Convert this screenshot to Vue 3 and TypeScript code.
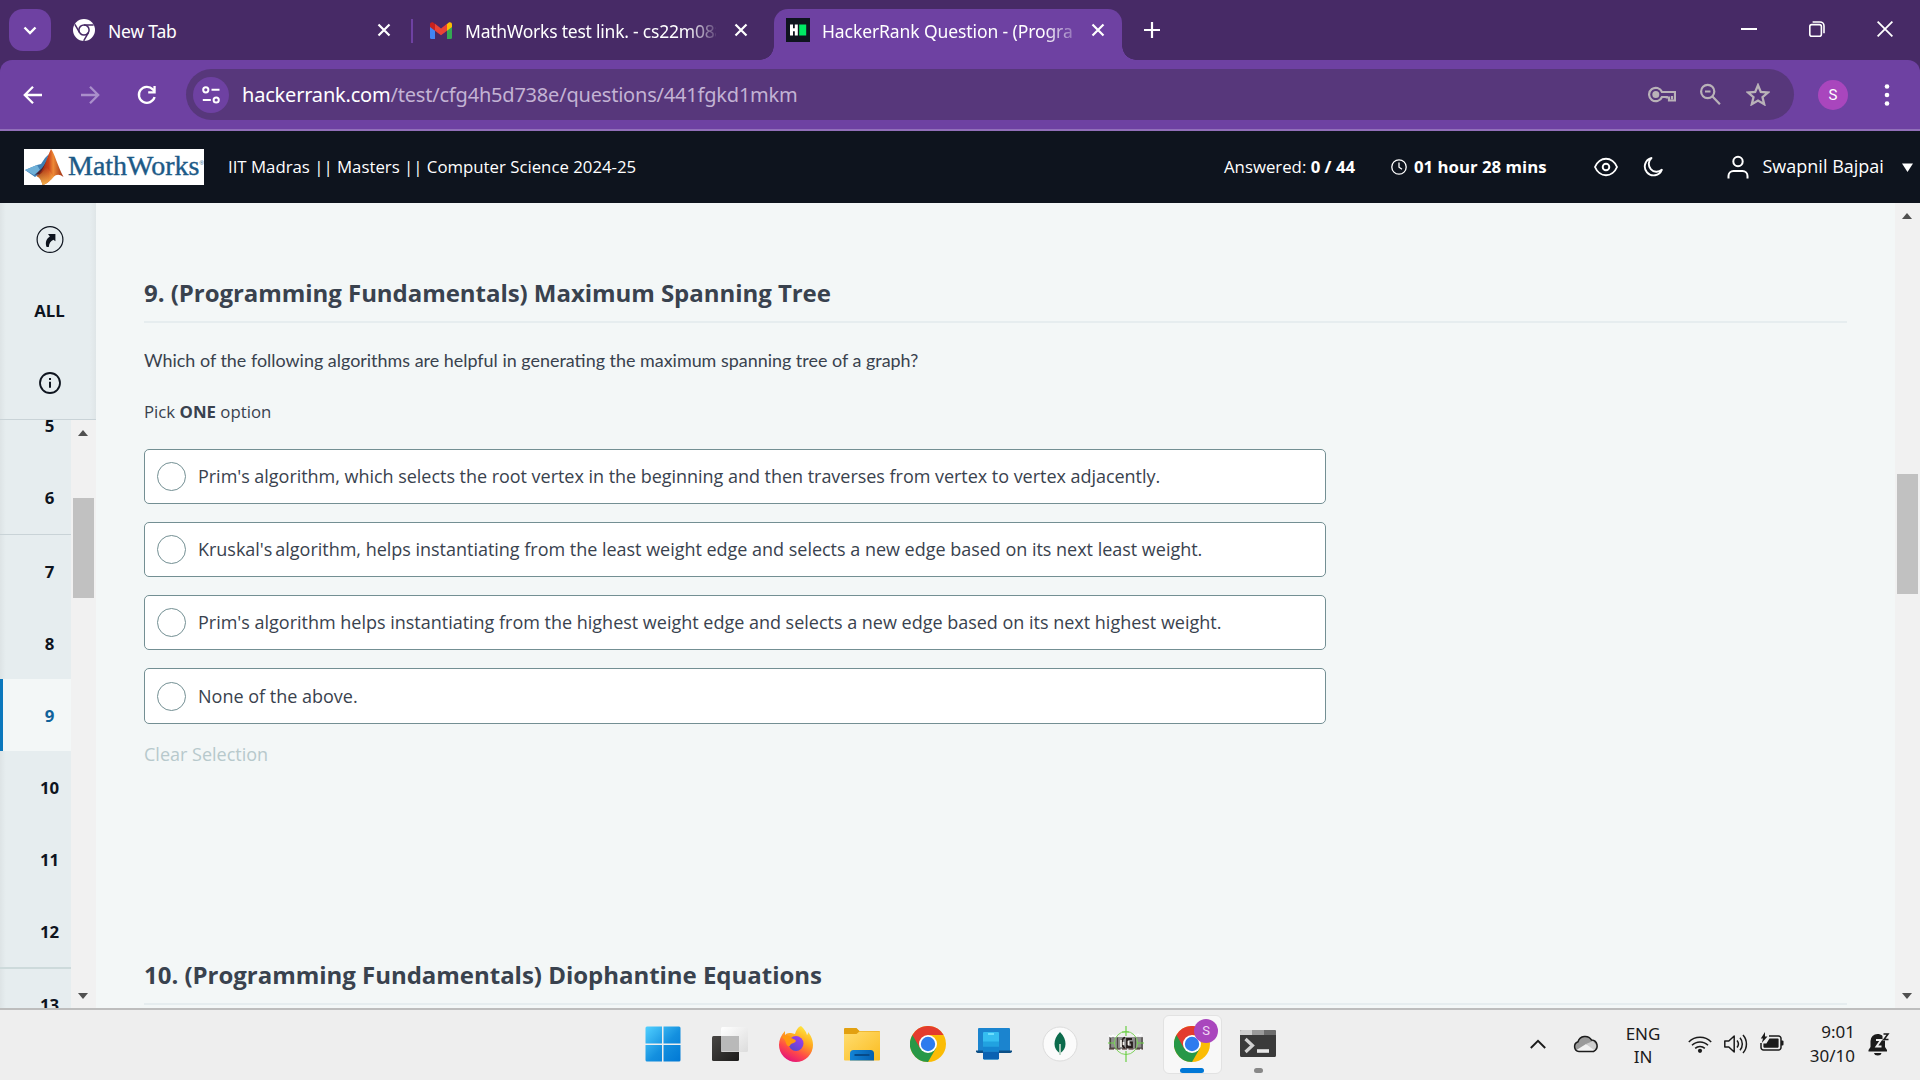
<script setup lang="ts">
interface NavEntry {
  id: number
  label: string
  active?: boolean
  rule?: 'thin' | 'thick'
}

const entries: NavEntry[] = [
  { id: 5, label: '5' },
  { id: 6, label: '6', rule: 'thin' },
  { id: 7, label: '7' },
  { id: 8, label: '8' },
  { id: 9, label: '9', active: true },
  { id: 10, label: '10' },
  { id: 11, label: '11' },
  { id: 12, label: '12', rule: 'thick' },
  { id: 13, label: '13' },
]

const options: { key: string; text: string }[] = [
  { key: 'a', text: "Prim's algorithm, which selects the root vertex in the beginning and then traverses from vertex to vertex adjacently." },
  { key: 'b', text: "Kruskal's\u2009algorithm, helps instantiating from the least weight edge and selects a new edge based on its next least weight." },
  { key: 'c', text: "Prim's algorithm helps instantiating from the highest weight edge and selects a new edge based on its next highest weight." },
  { key: 'd', text: 'None of the above.' },
]
</script>

<template>
  <div class="screen">
    <div class="tabstrip">
      <div class="tab-search">
        <svg width="42" height="42" viewBox="0 0 42 42"><path d="M15.500 18.500l5.500 5.500 5.500-5.500" fill="none" stroke="#fff" stroke-width="2.400" /></svg>
      </div>
      <div class="tab tab-one">
        <svg class="fav" width="22" height="22" viewBox="0 0 22 22">
          <circle cx="11" cy="11" r="11" fill="#fff" />
          <circle cx="11" cy="11" r="5.100" fill="#fff" stroke="#472a66" stroke-width="1.500" />
          <path d="M11 5.900h9.600M6.600 13.600L1.900 5.400M15.400 13.600L10.700 21.800" stroke="#472a66" stroke-width="1.500" />
        </svg>
        <span class="tab-title t1">New Tab</span>
        <svg class="x" width="14" height="14" viewBox="0 0 14 14"><path d="M1.500 1.500l11 11M12.500 1.500l-11 11" stroke="#fff" stroke-width="2.200" /></svg>
      </div>
      <div class="tab-sep"></div>
      <div class="tab tab-two">
        <svg class="fav" width="22" height="17" viewBox="0 0 22 17">
          <path d="M0 3v12.500a1.500 1.500 0 0 0 1.500 1.500H5V7z" fill="#4285f4" />
          <path d="M22 3v12.500a1.500 1.500 0 0 1-1.500 1.500H17V7z" fill="#34a853" />
          <path d="M17 2l1.500-1.200C20 -.3 22 .5 22 2.500V5l-5 3.800z" fill="#fbbc04" />
          <path d="M5 2L3.500 .8C2 -.3 0 .5 0 2.500V5l5 3.800z" fill="#c5221f" />
          <path d="M5 8.800V1.800l6 4.600 6-4.600v7l-6 4.500z" fill="#ea4335" />
        </svg>
        <span class="tab-title t2">MathWorks test link. - cs22m088</span>
        <svg class="x" width="14" height="14" viewBox="0 0 14 14"><path d="M1.500 1.500l11 11M12.500 1.500l-11 11" stroke="#fff" stroke-width="2.200" /></svg>
      </div>
      <div class="tab tab-active">
        <svg class="fav" width="24" height="24" viewBox="0 0 24 24">
          <rect width="24" height="24" fill="#0e141e" />
          <path d="M4 6.500h3v3.800h1.800V6.500h3v11H8.800v-4.200H7v4.200H4z" fill="#fff" />
          <rect x="13.200" y="6.500" width="7" height="11" fill="#00ea64" />
        </svg>
        <span class="tab-title t3">HackerRank Question - (Program</span>
        <svg class="x" width="14" height="14" viewBox="0 0 14 14"><path d="M1.500 1.500l11 11M12.500 1.500l-11 11" stroke="#fff" stroke-width="2.200" /></svg>
      </div>
      <svg class="plus" width="16" height="16" viewBox="0 0 16 16"><path d="M8 0v16M0 8h16" stroke="#fff" stroke-width="2.200" /></svg>
      <div class="window-controls">
        <svg width="16" height="16" viewBox="0 0 16 16"><path d="M0 8h16" stroke="#fff" stroke-width="2" /></svg>
        <svg width="16" height="16" viewBox="0 0 16 16"><g fill="none" stroke="#fff" stroke-width="1.600"><rect x=".8" y="3.600" width="11.600" height="11.600" rx="2" /><path d="M3.600 1h7.400a4 4 0 0 1 4 4v7.200" /></g></svg>
        <svg width="16" height="16" viewBox="0 0 16 16"><path d="M.6 .6l14.800 14.800M15.400 .6L.6 15.400" stroke="#fff" stroke-width="1.800" /></svg>
      </div>
    </div>

    <div class="toolbar-wrap">
      <div class="toolbar">
        <svg class="nav-back" width="20" height="20" viewBox="0 0 20 20"><path d="M19 10H2M10 1.800L1.800 10 10 18.200" fill="none" stroke="#fff" stroke-width="2.300" /></svg>
        <svg class="nav-fwd" width="20" height="20" viewBox="0 0 20 20"><path d="M1 10h17M10 1.800L18.200 10 10 18.200" fill="none" stroke="#aa8fcb" stroke-width="2.300" /></svg>
        <svg class="nav-reload" width="20" height="20" viewBox="0 0 20 20"><path d="M17.600 12A8 8 0 1 1 15.800 4.400L17.500 6.500" fill="none" stroke="#fff" stroke-width="2.300" /><path d="M18.700 1v7.500h-7.500V6.300h5.200V1z" fill="#fff" /></svg>
        <div class="omnibox">
          <div class="site-info">
            <svg width="18" height="18" viewBox="0 0 18 18"><g fill="none" stroke="#fff" stroke-width="2"><circle cx="3.800" cy="3.800" r="2.600" /><circle cx="14.200" cy="14" r="2.600" /><path d="M9.500 3.800H17.500M.8 14h8" /></g></svg>
          </div>
          <div class="url"><span class="host">hackerrank.com</span><span class="path">/test/cfg4h5d738e/questions/441fgkd1mkm</span></div>
          <div class="omni-actions">
            <svg width="28" height="18" viewBox="0 0 28 18"><g fill="none" stroke="#b9b2b8" stroke-width="2.200"><path d="M14 6h13v8.500h-6V11.500h-2.200v-0.500H14A6.700 6.700 0 1 1 14 6z" /><circle cx="7.800" cy="8.500" r="2.400" fill="#b9b2b8" /><path d="M24 10v3.500" /></g></svg>
            <svg width="22" height="24" viewBox="0 0 22 24"><g fill="none" stroke="#b9b2b8" stroke-width="2.200"><circle cx="7.700" cy="8.500" r="6.600" /><path d="M12.500 13.500l7.400 7.800M5 8.500h5.500" /></g></svg>
            <svg width="24" height="23" viewBox="0 0 24 23"><path d="M12 2.200l2.800 6.700 7.200.6-5.500 4.700 1.700 7L12 17.500l-6.200 3.700 1.700-7L2 9.500l7.200-.6z" fill="none" stroke="#b9b2b8" stroke-width="2.300" /></svg>
          </div>
        </div>
        <div class="avatar">S</div>
        <svg class="kebab" width="6" height="24" viewBox="0 0 6 24"><g fill="#fff"><circle cx="3" cy="3.500" r="2.300" /><circle cx="3" cy="12" r="2.300" /><circle cx="3" cy="20.500" r="2.300" /></g></svg>
      </div>
    </div>

    <header class="test-header">
      <div class="logo">
        <svg width="41" height="36" viewBox="0 0 41 36">
          <defs>
            <linearGradient id="flame" x1="0" x2="1"><stop offset="0" stop-color="#7a1f12" /><stop offset=".45" stop-color="#c9421a" /><stop offset=".62" stop-color="#ee8a35" /><stop offset="1" stop-color="#9c2a12" /></linearGradient>
            <linearGradient id="flame-base" x1="0" y1="0" x2="0" y2="1"><stop offset="0" stop-color="#f2a43c" stop-opacity="0" /><stop offset="1" stop-color="#f6b44c" /></linearGradient>
          </defs>
          <path d="M1 21l12-5 4-1 4-6 4-4-6 17-8 6z" fill="#3f7fb4" />
          <path d="M1 21l12-5 3 5-6 5z" fill="#6fb0d8" />
          <path d="M11 26l5-5c4-3 7-10 9-15-1 9-2 17-8 20-2-1-4-1-6 0z" fill="#54202a" />
          <path d="M27 0c3 3 7 18 12.500 28-4-3-7-3-10 0-3 3-6 7-11 8-1-5-3-8-6-9 8-5 10-18 14.500-27z" fill="url(#flame)" />
          <path d="M22 18c3 2 5 6 7.500 10-3 3-6 7-11 8-1-5-3-8-6-9 4-1 7-5 9.500-9z" fill="url(#flame-base)" />
        </svg>
        <span class="logo-word">MathWorks</span><span class="logo-reg">®</span>
      </div>
      <span class="test-name">IIT Madras || Masters || Computer Science 2024-25</span>
      <span class="answered">Answered: <b>0 / 44</b></span>
      <svg class="clock" width="16" height="16" viewBox="0 0 16 16"><g fill="none" stroke="#fff" stroke-width="1.300"><circle cx="8" cy="8" r="7.200" /><path d="M8 3.500V8.200l3 2" /></g></svg>
      <b class="timer">01 hour 28 mins</b>
      <svg class="eye" width="24" height="20" viewBox="0 0 24 20"><g fill="none" stroke="#fff" stroke-width="1.900"><path d="M1 10C3 5 7.500 1.800 12 1.800S21 5 23 10c-2 5-6.500 8.200-11 8.200S3 15 1 10z" /><circle cx="12" cy="10" r="3.300" /></g></svg>
      <svg class="moon" width="20" height="20" viewBox="0 0 20 20"><path d="M8.500 1A8.800 8.800 0 1 0 18.800 12.800 7.600 7.600 0 0 1 8.500 1z" fill="none" stroke="#fff" stroke-width="1.900" stroke-linejoin="round" /></svg>
      <svg class="person" width="22" height="24" viewBox="0 0 22 24"><g fill="none" stroke="#fff" stroke-width="2"><circle cx="11" cy="6.500" r="4.700" /><path d="M1.500 23.500v-2.500a5 5 0 0 1 5-5h9a5 5 0 0 1 5 5V23.500" /></g></svg>
      <span class="user">Swapnil Bajpai</span>
      <svg class="caret" width="11" height="9" viewBox="0 0 11 9"><path d="M0 .5h11L5.500 9z" fill="#fff" /></svg>
    </header>

    <div class="body">
      <aside class="side">
        <div class="side-top">
          <div class="side-cell">
            <svg width="28" height="28" viewBox="0 0 28 28"><circle cx="14" cy="14.500" r="12.900" fill="none" stroke="#0e141e" stroke-width="1.200" /><path d="M12 9.100h7.400v7.200l-2-1.600c-3 1.300-4.200 3.500-4.600 7.400H10.600c-1.600-4.600-.5-8.300 3.300-10.700z" fill="#0e141e" /></svg>
          </div>
          <div class="side-cell"><span class="all">ALL</span></div>
          <div class="side-cell">
            <svg width="22" height="22" viewBox="0 0 22 22"><circle cx="11" cy="11" r="10" fill="none" stroke="#0e141e" stroke-width="1.800" /><path d="M11 9.800v6M11 6v2" stroke="#0e141e" stroke-width="2" /></svg>
          </div>
        </div>
        <div class="side-list">
          <div class="entries">
            <div v-for="e in entries" :key="e.id" class="entry" :class="[{ active: e.active }, e.rule]"><span>{{ e.label }}</span></div>
          </div>
          <div class="scroll side-scroll">
            <i class="up"></i><div class="thumb"></div><i class="down"></i>
          </div>
        </div>
      </aside>

      <main class="content">
        <h2 class="q-title">9. (Programming Fundamentals) Maximum Spanning Tree</h2>
        <p class="q-text">Which of the following algorithms are helpful in generating the maximum spanning tree of a graph?</p>
        <p class="q-pick">Pick <b>ONE</b> option</p>
        <div class="options">
          <label v-for="o in options" :key="o.key" class="option"><span class="radio"></span><span class="option-text" :class="'opt-' + o.key">{{ o.text }}</span></label>
        </div>
        <div class="clear">Clear Selection</div>
        <h2 class="q-title next">10. (Programming Fundamentals) Diophantine Equations</h2>
      </main>
      <div class="scroll page-scroll">
        <i class="up"></i><div class="thumb"></div><i class="down"></i>
      </div>
    </div>

    <footer class="taskbar">
      <div class="apps">
        <div class="app">
          <svg width="36" height="36" viewBox="0 0 36 36">
            <defs><linearGradient id="win" x1="0" y1="0" x2="1" y2="1"><stop offset="0" stop-color="#51d0ff" /><stop offset=".55" stop-color="#1490df" /><stop offset="1" stop-color="#0078d4" /></linearGradient></defs>
            <path d="M2 .5h15v17H.5V2A1.500 1.500 0 0 1 2 .5zM18.500 .5H34A1.500 1.500 0 0 1 35.500 2v15.500h-17zM.5 19H17v16.500H2A1.500 1.500 0 0 1 .5 34zM18.500 19h17v15a1.500 1.500 0 0 1-1.500 1.500H18.500z" fill="url(#win)" />
          </svg>
        </div>
        <div class="app">
          <svg width="36" height="36" viewBox="0 0 36 36">
            <defs>
              <linearGradient id="tvd" x1="0" y1="0" x2="1" y2="1"><stop offset="0" stop-color="#484644" /><stop offset="1" stop-color="#1c1b1a" /></linearGradient>
              <linearGradient id="tvl" x1="0" y1="0" x2="1" y2="1"><stop offset="0" stop-color="#fff" /><stop offset="1" stop-color="#dcdcdc" /></linearGradient>
            </defs>
            <rect x="0" y="10" width="27" height="25" rx="1.500" fill="url(#tvd)" />
            <rect x="9" y="1" width="27" height="25" rx="1.500" fill="url(#tvl)" />
            <path d="M9 10h18v15.500H9z" fill="#b9b9b9" />
          </svg>
        </div>
        <div class="app">
          <svg width="36" height="36" viewBox="0 0 36 36">
            <defs>
              <linearGradient id="ff" x1=".8" y1="0" x2=".3" y2="1"><stop offset="0" stop-color="#fff044" /><stop offset=".4" stop-color="#ffa51e" /><stop offset=".7" stop-color="#ff4a48" /><stop offset="1" stop-color="#e2107e" /></linearGradient>
              <linearGradient id="ffg" x1=".8" y1="0" x2=".2" y2="1"><stop offset="0" stop-color="#a33df0" /><stop offset="1" stop-color="#5448c8" /></linearGradient>
            </defs>
            <path d="M23 0c3 3 5 5 6 9 1-1 1-2 1-3 4 5 5 9 5 13a17 17 0 0 1-34 0C1 14 3 9 7 5v4c2-2 4-2 6-2l4 1c1-4 3-7 6-8z" fill="url(#ff)" />
            <circle cx="18" cy="17.500" r="7.500" fill="url(#ffg)" />
            <path d="M4 11c3-2 7-2 9 1 2 1 4 1 5 3-1 2-4 2-5 3-1 1-1 3-3 2-3-2-1-5-6-9z" fill="#ff980e" />
          </svg>
        </div>
        <div class="app">
          <svg width="36" height="36" viewBox="0 0 36 36">
            <defs>
              <linearGradient id="fd" x1="0" y1="0" x2="1" y2="1"><stop offset="0" stop-color="#ffdd70" /><stop offset="1" stop-color="#fbbc20" /></linearGradient>
              <linearGradient id="fb" x1="0" y1="0" x2="1" y2="0"><stop offset="0" stop-color="#1384d6" /><stop offset="1" stop-color="#0560b0" /></linearGradient>
            </defs>
            <path d="M0 3A1 1 0 0 1 1 2h11.500l3 3H35a1 1 0 0 1 1 1V9H0z" fill="#e2a010" />
            <path d="M0 8h12.500l3-2.500H36v28a1 1 0 0 1-1 1H1a1 1 0 0 1-1-1z" fill="url(#fd)" />
            <path d="M6 34.500v-7A3.500 3.500 0 0 1 9.500 24h17A3.500 3.500 0 0 1 30 27.500v7z" fill="url(#fb)" />
            <path d="M10.500 29h15" stroke="#064a88" stroke-width="2" />
          </svg>
        </div>
        <div class="app">
          <svg width="36" height="36" viewBox="0 0 36 36">
            <circle cx="18" cy="18" r="18" fill="#fbbc05" />
            <path d="M18 18L2.400 9A18 18 0 0 0 18 36l7.800-13.500z" fill="#279847" />
            <path d="M18 9h15.600A18 18 0 0 0 2.400 9l7.800 13.500z" fill="#e33b2e" />
            <circle cx="18" cy="18" r="9" fill="#fff" /><circle cx="18" cy="18" r="7.200" fill="#2d7cee" />
          </svg>
        </div>
        <div class="app">
          <svg width="36" height="36" viewBox="0 0 36 36">
            <path d="M2 3a1 1 0 0 1 1-1h30a1 1 0 0 1 1 1v22H2z" fill="#1b84cf" />
            <path d="M0 24.500h36v1.500l-1.500 1H1.500L0 26z" fill="#0c4f86" />
            <rect x="7" y="6" width="16" height="27.500" rx="1" fill="#35bdf0" />
            <path d="M7 15.500h16v5H7z" fill="#21a2e0" /><path d="M7 20.500h16v5H7z" fill="#1485d0" /><path d="M7 25.500h16v7l-1 1H8l-1-1z" fill="#0a62b2" />
            <path d="M12 8h6" stroke="#7be6ff" stroke-width="1.600" />
          </svg>
        </div>
        <div class="app">
          <svg width="36" height="36" viewBox="0 0 36 36">
            <circle cx="18" cy="18" r="17" fill="#fbfbfb" stroke="#dcdcdc" />
            <path d="M18 6c4 4 5.500 8 5.500 12 0 4-2 7-5 9l-.5 2-.5-2c-3-2-5-5-5-9C12.500 14 14 10 18 6z" fill="#0c6b4c" />
            <path d="M18 18v11" stroke="#b9d3c4" stroke-width="1.800" />
          </svg>
        </div>
        <div class="app">
          <svg width="36" height="36" viewBox="0 0 36 36">
            <path d="M1 11h34v12H1z" fill="#8e8e8e" />
            <path d="M2.500 11.500v10.500h5M9.500 11.500v10.500M27.500 11.500v10.500M34 11.500v10.500h-5" stroke="#4a4541" stroke-width="1.200" fill="none" />
            <path d="M17 11.500c-4 1-4 9 0 10.500M24 13h-5v8h5v-4.500h-2.500" stroke="#241c1a" stroke-width="1.800" fill="none" />
            <path d="M13 14v7M20.500 15v4M15.500 16v3" stroke="#f4f1ec" stroke-width="1.700" fill="none" />
            <path d="M1 23h34" stroke="#3a2018" stroke-width="1" stroke-dasharray="5 1.500" />
            <path d="M1 9l2 2 2-2 2 2 2-2M26 8l2 2 2-2 2 2 2-2" stroke="#fff" stroke-width="1.200" fill="none" />
            <circle cx="18" cy="17" r="11.500" fill="none" stroke="#7fd45c" stroke-width="1" />
            <path d="M18 0v10M18 25v11M0 17h6M29 17h7M14 6h7" stroke="#6bcf45" stroke-width="1.200" />
          </svg>
        </div>
        <div class="app running">
          <svg width="36" height="36" viewBox="0 0 36 36">
            <circle cx="18" cy="18" r="18" fill="#fbbc05" />
            <path d="M18 18L2.400 9A18 18 0 0 0 18 36l7.800-13.500z" fill="#279847" />
            <path d="M18 9h15.600A18 18 0 0 0 2.400 9l7.800 13.500z" fill="#e33b2e" />
            <circle cx="18" cy="18" r="9" fill="#fff" /><circle cx="18" cy="18" r="7.200" fill="#2d7cee" />
          </svg>
          <span class="profile-badge">S</span>
          <i class="pill"></i>
        </div>
        <div class="app">
          <svg width="36" height="36" viewBox="0 0 36 36">
            <path d="M0 5.500A1.500 1.500 0 0 1 1.500 4h33A1.500 1.500 0 0 1 36 5.500V29.500a1.500 1.500 0 0 1-1.500 1.500h-33A1.500 1.500 0 0 1 0 29.500z" fill="#3a3a3a" />
            <path d="M0 9V5.500A1.500 1.500 0 0 1 1.500 4H12v5z" fill="#cfcfcf" /><path d="M12 4h12v5H12z" fill="#9a9a9a" /><path d="M24 4h10.500A1.500 1.500 0 0 1 36 5.500V9H24z" fill="#6c6c6c" />
            <path d="M5.500 13l7 6.500-7 6.500" fill="none" stroke="#d2d2d2" stroke-width="3.200" />
            <path d="M17 25h12" stroke="#e8e8e8" stroke-width="3.600" />
          </svg>
          <i class="dot"></i>
        </div>
      </div>
      <div class="tray">
        <svg class="chev" width="16" height="10" viewBox="0 0 16 10"><path d="M.8 9L8 1.800 15.200 9" fill="none" stroke="#1b1b1b" stroke-width="1.900" /></svg>
        <svg class="cloud" width="26" height="18" viewBox="0 0 26 18">
          <path d="M6 16.500a5 5 0 0 1-1-9.700A7.500 7.500 0 0 1 18.500 5 6 6 0 0 1 20.500 16.500z" fill="#9a9a9a" />
          <path d="M3.500 15l9.500-6 8 4 1 2-2 1.500H6z" fill="#f1f1f1" /><path d="M13 9l7-3 4 5-3 4z" fill="#cfcfcf" />
          <path d="M6 16.500a5 5 0 0 1-1-9.700A7.500 7.500 0 0 1 18.500 5 6 6 0 0 1 20.500 16.500z" fill="none" stroke="#1b1b1b" stroke-width="1.500" />
        </svg>
        <div class="lang"><span>ENG</span><span>IN</span></div>
        <svg class="wifi" width="24" height="18" viewBox="0 0 24 18"><g fill="none" stroke="#1b1b1b" stroke-width="1.500"><path d="M.8 7a15.800 15.800 0 0 1 22.400 0M4 10.300a11.300 11.300 0 0 1 16 0M7.200 13.400a6.800 6.800 0 0 1 9.600 0" /></g><circle cx="12" cy="15.800" r="2.100" fill="#1b1b1b" /></svg>
        <svg class="vol" width="24" height="20" viewBox="0 0 24 20"><g fill="none" stroke="#1b1b1b" stroke-width="1.500"><path d="M.8 7h4l5.400-5v16l-5.400-5h-4z" stroke-linejoin="round" /><path d="M13 6.500a5.500 5.500 0 0 1 0 7M16 3.800a9.500 9.500 0 0 1 0 12.400M19 1a13.500 13.500 0 0 1 0 18" /></g></svg>
        <svg class="batt" width="24" height="20" viewBox="0 0 24 20"><path d="M9 4h9.500A2.500 2.500 0 0 1 21 6.500v9a2.500 2.500 0 0 1-2.500 2.500H3.500A2.500 2.500 0 0 1 1 15.500V11" fill="none" stroke="#1b1b1b" stroke-width="1.500" /><path d="M9.500 6.500H18l.6.600v8l-.6.600H4l-.6-.6V11.500h3z" fill="#1b1b1b" /><path d="M21 8.500h1.500a1 1 0 0 1 1 1v3a1 1 0 0 1-1 1H21z" fill="#1b1b1b" /><path d="M5 0L.8 6.500H3L1.800 11 7.500 4.500H5z" fill="#1b1b1b" /></svg>
        <div class="datetime"><span>9:01</span><span>30/10</span></div>
        <div class="bell">
          <svg width="22" height="24" viewBox="0 0 22 24"><path d="M9.500 2a7 7 0 0 0-7 7v6L.5 18v1.500h18.500V18l-2-3V9c0-5-4-7-7.500-7z" fill="#1b1b1b" /><path d="M6 21h7.500a3.800 3 0 0 1-7.500 0z" fill="#1b1b1b" /><path d="M14.500 0h7v8.500h-7z" fill="#eee" /><path d="M8 8h5l-4.500 6.500h5" stroke="#eee" stroke-width="1.900" fill="none" /><path d="M15.500 2h4.500l-4 5.500h4.500" stroke="#1b1b1b" stroke-width="1.600" fill="none" /></svg>
        </div>
      </div>
    </footer>
  </div>
</template>

<style>
body { margin: 0; overflow: hidden; }
</style>

<style scoped>
* { box-sizing: border-box; }
.screen { width: 1920px; height: 1080px; display: flex; flex-direction: column; overflow: hidden; font-family: "Open Sans", "Noto Sans", sans-serif; background: #f3f7f7; }
svg { display: block; flex: none; }
span, b { white-space: nowrap; }

.tabstrip { height: 60px; flex: none; background: #472a66; display: flex; padding-left: 9px; font-family: "Noto Sans", "Open Sans", sans-serif; }
.tab-search { width: 42px; height: 42px; margin-top: 9px; border-radius: 14px; background: #6e41a2; flex: none; }
.tab { display: flex; align-items: center; height: 60px; flex: none; }
.tab-title { font-size: 17.500px; line-height: 24px; padding-top: 2px; color: #fff; overflow: hidden; }
.tab-one { margin-left: 22px; width: 338px; }
.t1 { margin-left: 13px; width: 269px; letter-spacing: -.2px; }
.tab-sep { width: 2px; height: 24px; margin-top: 19px; background: #6e41a2; flex: none; }
.tab-two { margin-left: 17px; width: 318px; }
.t2 { margin-left: 13px; width: 251px; margin-right: 18px; letter-spacing: -.22px; -webkit-mask-image: linear-gradient(90deg, #000 222px, transparent 256px); mask-image: linear-gradient(90deg, #000 222px, transparent 256px); }
.tab-active { position: relative; width: 348px; height: 51px; margin: 9px 0 0 26px; padding: 0 0 9px 12px; background: #6e41a2; border-radius: 14px 14px 0 0; }
.tab-active::before, .tab-active::after { content: ""; position: absolute; bottom: 0; width: 14px; height: 14px; }
.tab-active::before { left: -14px; background: radial-gradient(circle at 0 0, transparent 13.500px, #6e41a2 14px); }
.tab-active::after { right: -14px; background: radial-gradient(circle at 100% 0, transparent 13.500px, #6e41a2 14px); }
.t3 { margin-left: 12px; width: 251px; margin-right: 18px; letter-spacing: -.1px; -webkit-mask-image: linear-gradient(90deg, #000 222px, transparent 262px); mask-image: linear-gradient(90deg, #000 222px, transparent 262px); }
.plus { margin: 22px 0 0 22px; }
.window-controls { margin: 21px 27px 0 auto; display: flex; gap: 52px; height: 16px; }

.toolbar-wrap { height: 71px; flex: none; background: #472a66; }
.toolbar { height: 71px; background: #6e41a2; border-radius: 12px 12px 0 0; border-bottom: 2px solid #916fb9; display: flex; align-items: center; padding-left: 23px; }
.nav-fwd { margin-left: 37px; }
.nav-reload { margin-left: 37px; }
.omnibox { margin-left: 29px; width: 1608px; height: 51px; border-radius: 26px; background: #57377b; display: flex; align-items: center; padding-left: 7px; flex: none; font-family: "Noto Sans", "Open Sans", sans-serif; }
.site-info { width: 36px; height: 36px; border-radius: 50%; background: #6e41a2; display: grid; place-items: center; }
.url { margin-left: 13px; font-size: 20px; line-height: 28px; letter-spacing: -.2px; color: #c3b3d4; display: flex; }
.host { color: #fff; }
.omni-actions { margin-left: auto; margin-right: 24px; display: flex; align-items: center; gap: 24px; }
.avatar { margin-left: 24px; width: 30px; height: 30px; border-radius: 50%; background: #a946bd; color: #fff; font: 15px/30px Roboto, sans-serif; text-align: center; flex: none; }
.kebab { margin-left: 36px; }

.test-header { height: 72px; flex: none; background: #0e141e; color: #fff; display: flex; align-items: center; padding-left: 24px; font-size: 16.800px; line-height: 24px; }
.logo { width: 180px; height: 36px; background: #fff; display: flex; overflow: hidden; flex: none; }
.logo-word { font: 28px/34px "Liberation Serif", serif; color: #1d5a87; margin-left: 3px; -webkit-text-stroke: .4px #1d5a87; }
.logo-reg { font: 6px/28px "Liberation Sans", sans-serif; color: #1d5a87; }
.test-name { margin-left: 24px; width: 996px; }
.answered { width: 167px; }
.timer { margin-left: 7px; width: 180px; }
.moon { margin-left: 25px; }
.person { margin-left: 64px; }
.user { margin-left: 13.500px; width: 139.500px; font-size: 18px; padding-bottom: 2px; }

.body { height: 805px; flex: none; display: flex; background: #f3f7f7; overflow: hidden; }
.side { width: 96px; flex: none; background: #e6edef; display: flex; flex-direction: column; }
.side-top { height: 217px; flex: none; border-bottom: 1px solid #c9d3d7; background: linear-gradient(90deg, rgba(0,0,0,.04), transparent 6px, transparent 90px, rgba(0,0,0,.03)); }
.side-cell { height: 72px; padding-left: 3px; display: grid; place-items: center; }
.all { font-weight: 700; font-size: 16.800px; color: #0e141e; padding-bottom: 2px; }
.side-list { height: 588px; display: flex; overflow: hidden; }
.entries { width: 71px; margin-top: -30px; flex: none; }
.entry { height: 72px; width: 71px; padding-left: 28px; display: grid; place-items: center; font-weight: 700; font-size: 16.800px; color: #0e141e; background: linear-gradient(90deg, rgba(0,0,0,.04), transparent 6px); }
.entry:nth-child(-n+2) span, .entry:last-child span { padding-bottom: 2px; }
.entry.thin { height: 73px; border-bottom: 1px solid #c9d3d7; }
.entry.thick { height: 74px; border-bottom: 2px solid #cddadb; }
.entry.active { background: #f3f7f7; color: #10629a; border-left: 3px solid #0b78bd; padding-left: 25px; }
.scroll { width: 25px; flex: none; background: #f1f1f1; display: flex; flex-direction: column; align-items: center; }
.scroll .thumb { width: 21px; background: #c1c1c1; }
.scroll i { width: 0; height: 0; border: 5.500px solid transparent; flex: none; margin-right: 1px; }
.scroll .up { border-top: 0; border-bottom: 6px solid #505050; }
.scroll .down { border-bottom: 0; border-top: 6px solid #505050; margin-top: auto; margin-bottom: 9px; }
.side-scroll .up { margin-top: 10px; }
.side-scroll .thumb { margin-top: 62px; height: 100px; }
.page-scroll .up { margin-top: 10px; }
.page-scroll .thumb { margin-top: 255px; height: 120px; }

.content { width: 1799px; flex: none; padding: 72px 48px 0; color: #39424e; overflow: hidden; }
.q-title { margin: 0; height: 48px; border-bottom: 2px solid #e6edef; font-size: 24px; line-height: 36px; font-weight: 700; white-space: nowrap; letter-spacing: -.045px; }
.q-text { margin: 24px 0 0; font: 17.930px/27px Lato, "Open Sans", sans-serif; white-space: nowrap; }
.q-pick { margin: 24px 0 0; font-size: 16.800px; line-height: 27px; }
.options { margin-top: 24px; display: flex; flex-direction: column; gap: 18px; width: 1182px; }
.option { height: 55px; border: 1px solid #738f93; border-radius: 5px; background: #fff; display: flex; align-items: center; padding-left: 12px; }
.option:last-child { height: 56px; padding-top: 1px; }
.radio { width: 29px; height: 29px; border: 1px solid #738f93; border-radius: 50%; flex: none; }
.option-text { margin-left: 12px; font-size: 18px; line-height: 27px; }
.opt-a { letter-spacing: -.032px; }
.opt-b { letter-spacing: -.018px; }
.opt-c { letter-spacing: -.01px; }
.clear { margin-top: 17px; font-size: 18px; line-height: 27px; color: #b7c9cc; }
.next { margin-top: 189px; letter-spacing: -.025px; }

.taskbar { height: 72px; flex: none; background: #eee; border-top: 2px solid #bdbdbd; display: flex; color: #1b1b1b; }
.apps { display: flex; padding-left: 629px; flex: none; }
.app { width: 66px; height: 70px; padding: 16px 0 0 17px; position: relative; }
.app:first-child { padding-left: 15.500px; }
.running::before { content: ""; position: absolute; left: 6px; top: 5px; width: 57px; height: 57px; border: 1px solid #e2e2e2; border-radius: 6px; background: #f8f8f8; }
.running svg { position: relative; }
.profile-badge { position: absolute; left: 37px; top: 9px; width: 24px; height: 24px; border-radius: 50%; background: #a946bd; color: #f0d8f4; font: 13px/24px Roboto, sans-serif; text-align: center; }
.pill { position: absolute; left: 23px; top: 58px; width: 24px; height: 5px; border-radius: 3px; background: #0078d7; }
.dot { position: absolute; left: 31px; top: 58px; width: 9px; height: 5px; border-radius: 3px; background: #888; }
.tray { margin-left: 241px; display: flex; align-items: center; height: 68px; font-family: "Noto Sans", "Open Sans", sans-serif; }
.cloud { margin-left: 27px; }
.lang, .datetime { display: flex; flex-direction: column; font-size: 17px; line-height: 24px; }
.lang { margin-left: 27px; width: 34px; align-items: center; line-height: 23px; padding-top: 1px; }
.wifi { margin-left: 28px; }
.vol { margin-left: 12px; }
.batt { margin-left: 12px; margin-top: -4px; }
.datetime { margin-left: 21px; width: 50px; align-items: flex-end; }
.bell { margin-left: 13px; }
</style>
